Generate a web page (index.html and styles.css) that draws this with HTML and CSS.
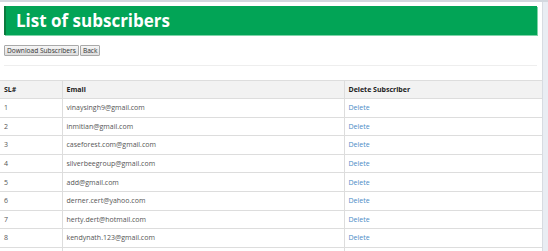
FILE: index.html
```html
<!DOCTYPE html>
<html lang="en">
<head>
    <meta charset="utf-8" />
    <title>List of subscribers</title>
    <link rel="stylesheet" href="styles.css">
</head>
<body>
    <div class="page">
        <div class="content">
            <h1 class="title">List of subscribers</h1>
            <div class="actions">
                <button type="button">Download Subscribers</button>
                <button type="button">Back</button>
            </div>
            <hr />
        </div>

        <table class="subscribers">
            <thead>
                <tr>
                    <th class="col-sl">SL#</th>
                    <th class="col-email">Email</th>
                    <th>Delete Subscriber</th>
                </tr>
            </thead>
            <tbody>
                <tr><td>1</td><td>vinaysingh9@gmail.com</td><td><a href="#">Delete</a></td></tr>
                <tr><td>2</td><td>inmitian@gmail.com</td><td><a href="#">Delete</a></td></tr>
                <tr><td>3</td><td>caseforest.com@gmail.com</td><td><a href="#">Delete</a></td></tr>
                <tr><td>4</td><td>silverbeegroup@gmail.com</td><td><a href="#">Delete</a></td></tr>
                <tr><td>5</td><td>add@gmail.com</td><td><a href="#">Delete</a></td></tr>
                <tr><td>6</td><td>derner.cert@yahoo.com</td><td><a href="#">Delete</a></td></tr>
                <tr><td>7</td><td>herty.dert@hotmail.com</td><td><a href="#">Delete</a></td></tr>
                <tr><td>8</td><td>kendynath.123@gmail.com</td><td><a href="#">Delete</a></td></tr>
                <tr><td></td><td></td><td></td></tr>
            </tbody>
        </table>
    </div>
</body>
</html>
```

FILE: styles.css
```css
* {
    padding: 0;
    margin: 0;
    box-sizing: border-box;
    font-family: "Open Sans", sans-serif;
}

html, body {
    height: 100%;
    overflow: hidden;
}

body {
    background-color: #e9edf3;
    border-top: 2px solid #d3d8df;
}

.page {
    width: 543px;
    min-height: 100%;
    background-color: #fff;
    border-right: 1px solid #d7dbe1;
}

.content {
    padding: 4px 5px 0 4px;
}

.title {
    background-color: #02a456;
    border-left: 2px solid #0b7a3e;
    color: #fff;
    font-size: 17px;
    font-weight: bold;
    line-height: 29px;
    padding-left: 10px;
    box-shadow: 1px 1px 0 #7fd3a9;
}

.actions {
    display: flex;
    gap: 1px;
    margin-top: 10px;
}

.actions button {
    font-size: 6.6px;
    line-height: 9px;
    padding: 0 2px;
    color: #333;
    background: linear-gradient(#f6f6f6, #dedede);
    border: 1px solid #a9a9a9;
    border-radius: 1px;
}

hr {
    border: none;
    border-top: 1px solid #eeeeee;
    margin-top: 9px;
}

.subscribers {
    width: 100%;
    margin-top: 14px;
    border-collapse: collapse;
    font-size: 7px;
    color: #555;
}

.subscribers th,
.subscribers td {
    border: 1px solid #dddddd;
    height: 18.6px;
    padding: 0 4px;
    text-align: left;
    vertical-align: middle;
}

.subscribers th {
    height: 18px;
    background-color: #f2f2f2;
    color: #222;
    font-weight: bold;
}

.subscribers th:first-child,
.subscribers td:first-child {
    border-left: none;
}

.subscribers th:last-child,
.subscribers td:last-child {
    border-right: none;
}

.col-sl {
    width: 62px;
}

.col-email {
    width: 282px;
}

.subscribers a {
    color: #4b8bc6;
    text-decoration: none;
}
```
